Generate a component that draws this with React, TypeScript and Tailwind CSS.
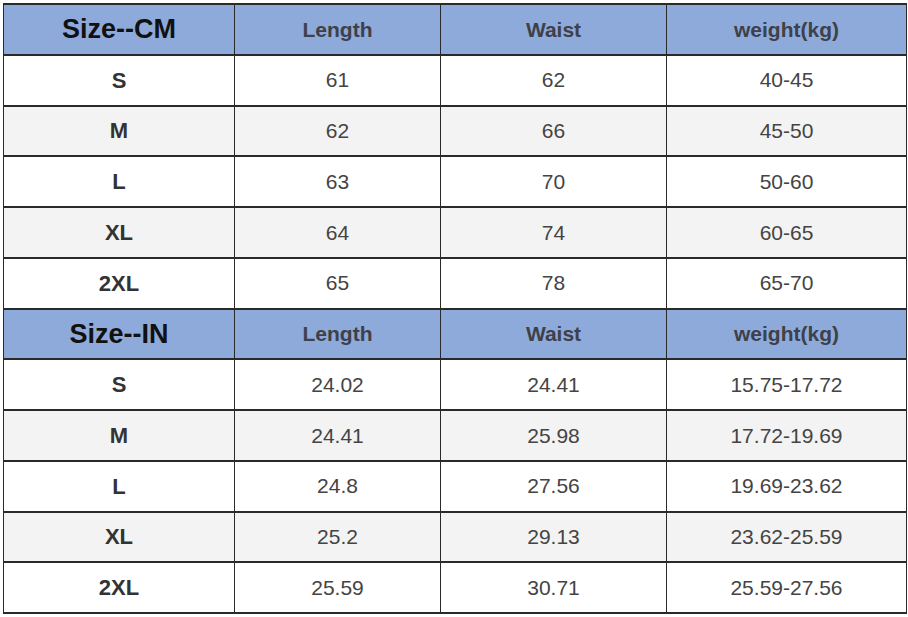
import React from 'react'

const cm = [
    ['S', '61', '62', '40-45'],
    ['M', '62', '66', '45-50'],
    ['L', '63', '70', '50-60'],
    ['XL', '64', '74', '60-65'],
    ['2XL', '65', '78', '65-70'],
]

const inch = [
    ['S', '24.02', '24.41', '15.75-17.72'],
    ['M', '24.41', '25.98', '17.72-19.69'],
    ['L', '24.8', '27.56', '19.69-23.62'],
    ['XL', '25.2', '29.13', '23.62-25.59'],
    ['2XL', '25.59', '30.71', '25.59-27.56'],
]

const cell = 'border-x border-y-2 border-[#2a2a2a] text-center align-middle p-0'

const Section: React.FC<{ title: string; rows: string[][] }> = ({ title, rows }) => (
    <>
        <tr className="h-[50.75px] bg-[#8eaadb]">
            <td className={`${cell} text-[27px] font-bold text-[#111]`}>{title}</td>
            <td className={`${cell} text-[21px] font-bold text-[#3d4149]`}>Length</td>
            <td className={`${cell} text-[21px] font-bold text-[#3d4149]`}>Waist</td>
            <td className={`${cell} text-[21px] font-bold text-[#3d4149]`}>weight(kg)</td>
        </tr>
        {rows.map((r, i) => (
            <tr key={r[0]} className={`h-[50.75px] ${i % 2 === 1 ? 'bg-[#f3f3f3]' : 'bg-white'}`}>
                <td className={`${cell} text-[22px] font-bold text-[#333]`}>{r[0]}</td>
                <td className={`${cell} text-[21px] text-[#444]`}>{r[1]}</td>
                <td className={`${cell} text-[21px] text-[#444]`}>{r[2]}</td>
                <td className={`${cell} text-[21px] text-[#444]`}>{r[3]}</td>
            </tr>
        ))}
    </>
)

export default function App() {
    return (
        <div className="w-[908px] h-[617px] bg-white pt-[3px] pl-[3px]" style={{ fontFamily: '"Liberation Sans", Arial, sans-serif' }}>
            <table className="table-fixed border-collapse w-[903px]">
                <colgroup>
                    <col className="w-[231px]" />
                    <col className="w-[206px]" />
                    <col className="w-[226px]" />
                    <col className="w-[240px]" />
                </colgroup>
                <tbody>
                    <Section title="Size--CM" rows={cm} />
                    <Section title="Size--IN" rows={inch} />
                </tbody>
            </table>
        </div>
    )
}
